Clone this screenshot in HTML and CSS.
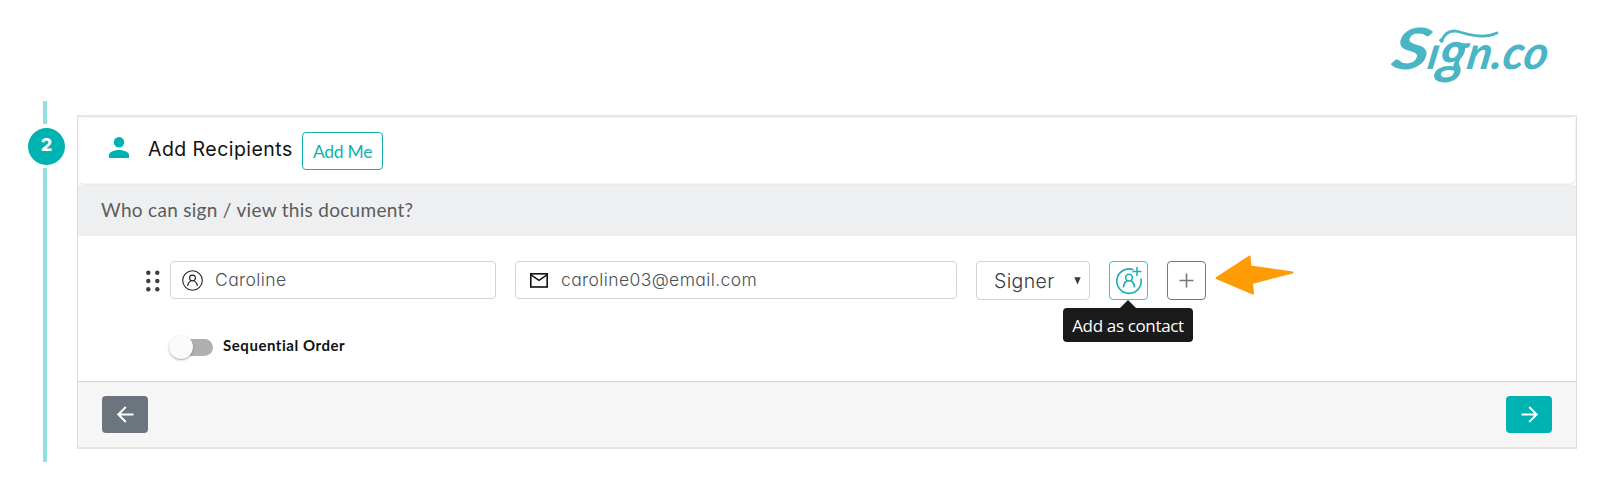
FILE: index.html
```html
<!DOCTYPE html>
<html lang="en">
<head>
<meta charset="utf-8">
<title>Add Recipients</title>
<link rel="stylesheet" href="styles.css">
</head>
<body>
<header class="top">
  <svg class="logo" width="180" height="80" viewBox="1375 15 180 80" role="img" aria-label="Sign.co">
    <g class="logo-text">
      <text transform="translate(1390 69) skewX(-10)" font-size="57" textLength="37" lengthAdjust="spacingAndGlyphs">S</text>
      <text transform="translate(1426 69) skewX(-10)" font-size="46" textLength="64" lengthAdjust="spacingAndGlyphs">ı<tspan font-size="58" dy="3">g</tspan><tspan dy="-3">n</tspan></text>
      <text transform="translate(1490 69) skewX(-10)" font-size="47" textLength="56" lengthAdjust="spacingAndGlyphs">.co</text>
    </g>
    <path d="M1441.500 40.500C1445 33 1450 29.500 1458 31.500C1474 36.500 1486 38 1497 33" fill="none" stroke="#4ab5c4" stroke-width="2.800" stroke-linecap="round"/>
    <circle cx="1441.500" cy="40.500" r="2.200" fill="#4ab5c4"/>
  </svg>
</header>
<main class="step">
  <aside class="rail">
    <span class="line line-top"></span>
    <span class="badge">2</span>
    <span class="line line-rest"></span>
  </aside>
  <section class="card">
    <div class="card-head">
      <svg class="person" width="20" height="21" viewBox="0 0 20 21"><circle cx="10" cy="5.200" r="5.200"/><path d="M0 21v-3c0-3.300 6-5 10-5s10 1.700 10 5v3z"/></svg>
      <h1 class="title"><span>Add Recipients</span></h1>
      <button class="add-me"><span>Add Me</span></button>
    </div>
    <div class="question"><span>Who can sign / view this document?</span></div>
    <div class="card-body">
      <div class="row">
        <svg class="grip" width="14" height="22" viewBox="0 0 14 22"><circle cx="2.300" cy="2.800" r="2.200"/><circle cx="11.300" cy="2.800" r="2.200"/><circle cx="2.300" cy="11" r="2.200"/><circle cx="11.300" cy="11" r="2.200"/><circle cx="2.300" cy="19.300" r="2.200"/><circle cx="11.300" cy="19.300" r="2.200"/></svg>
        <div class="field name">
          <svg width="21" height="21" viewBox="0 0 21 21" fill="none" stroke="#222" stroke-width="1.100"><circle cx="10.500" cy="10.500" r="9.800"/><circle cx="10.500" cy="8" r="2.900"/><path d="M5.500 15.800C6 12.500 7.800 11.500 9 10.600M15.500 15.800C15 12.500 13.200 11.500 12 10.600"/></svg>
          <span class="value">Caroline</span>
        </div>
        <div class="field email">
          <svg width="18" height="15" viewBox="0 0 18 15" fill="none" stroke="#111" stroke-width="1.600"><rect x=".8" y=".8" width="16.400" height="13.200"/><path d="M1 1.800L9 7.300L17 1.800" stroke-width="1.400"/></svg>
          <span class="value">caroline03@email.com</span>
        </div>
        <div class="select"><span class="value">Signer</span><svg width="7" height="8" viewBox="0 0 7 8"><path d="M.3 .3h6.400L3.500 7.500z" fill="#343a40"/></svg></div>
        <div class="contact">
          <button class="square teal" aria-label="Add as contact">
            <svg width="28" height="28" viewBox="0 0 28 28" fill="none" stroke="#15b0b2" stroke-width="1.600"><path d="M18.500 2.800A12.200 12.200 0 1 0 25.900 11.500"/><path d="M22 0v9M17.500 4.500h9" stroke-width="1.500"/><circle cx="14" cy="10.600" r="3.400"/><path d="M8.500 20.500C8.500 16 10.500 14.700 12.300 13.500M19.500 20.500C19.500 16 17.500 14.700 15.700 13.500"/></svg>
          </button>
          <div class="tooltip"><span>Add as contact</span></div>
        </div>
        <button class="square grey" aria-label="Add"><svg width="15" height="15" viewBox="0 0 15 15"><path d="M7.500 .5v14M.5 7.500h14" stroke="#777" stroke-width="1.600"/></svg></button>
        <svg class="pointer" width="79" height="41" viewBox="0 0 79 41"><path d="M1.500 23L34.500 1.500L35.500 11.500L77.500 17.500L37 28L38 38.500Z" fill="#ff9b05" stroke="#ff9b05" stroke-width="2" stroke-linejoin="round"/></svg>
      </div>
      <div class="order">
        <span class="toggle"><span class="knob"></span></span>
        <span class="order-label">Sequential Order</span>
      </div>
    </div>
    <footer class="card-foot">
      <button class="nav back" aria-label="Back"><svg width="17" height="17" viewBox="0 0 17 17"><path d="M16.500 8.500H1.500M8.800 1L1.300 8.500L8.800 16"/></svg></button>
      <button class="nav next" aria-label="Next"><svg width="17" height="17" viewBox="0 0 17 17"><path d="M.5 8.500h15M8.200 1l7.500 7.500L8.200 16"/></svg></button>
    </footer>
  </section>
</main>
</body>
</html>
```
FILE: styles.css
```css
* { box-sizing: border-box; }
body { margin: 0; height: 482px; overflow: hidden; background: #fff; font-family: Inter, "Liberation Sans", sans-serif; font-feature-settings: "cv11"; }
button { margin: 0; padding: 0; display: flex; align-items: center; justify-content: center; font-family: inherit; font-feature-settings: inherit; background: #fff; }
span { white-space: nowrap; }
svg { display: block; flex: none; overflow: visible; }
.top { height: 101px; padding: 15px 45px 0 0; display: flex; justify-content: flex-end; }
.logo-text { fill: #4ab5c4; font-family: Lato, sans-serif; font-weight: 700; font-style: italic; }
.step { display: flex; }
.rail { width: 77px; padding-left: 28px; display: flex; flex-direction: column; }
.line { width: 4px; margin-left: 15px; background: #92e0df; }
.line-top { height: 23px; }
.badge { width: 37px; height: 37px; margin: 4px 0 3px; border-radius: 50%; background: #00b3b3; color: #fff; font-size: 18px; font-weight: 800; line-height: 33px; text-align: center; }
.line-rest { height: 294px; }
.card { width: 1500px; height: 334px; margin-top: 14px; border: 1px solid #dedfe1; border-top: 2px solid #e7e7e8; border-bottom: 2px solid #e5e5e6; }
.card-head { height: 68px; display: flex; padding: 15px 0 0 31px; border-bottom: 1px solid #e9eaeb; border-radius: 6px; box-shadow: inset 0 0 0 1px #f4f4f5; }
.person { margin: 5px 19px 0 0; fill: #00b3b3; }
.title { margin: 3px 0 0; width: 154px; font-size: 19.500px; font-weight: 400; line-height: 28px; color: #111; letter-spacing: .45px; }
.add-me { width: 81px; height: 38px; border: 1px solid #13adad; border-radius: 4px; color: #0fb2b2; font-family: Lato, sans-serif; font-size: 17.500px; font-weight: 400; letter-spacing: -.3px; }
.question { height: 51px; padding: 12px 0 0 23px; background: #eeeff1; color: #5c5c5c; font-family: Lato, sans-serif; font-size: 19px; line-height: 26px; letter-spacing: .3px; }
.card-body { height: 145px; padding: 25px 0 0 67px; }
.row { display: flex; height: 39px; }
.grip { margin: 9px 11px 0 1px; fill: #3b3e42; }
.field { height: 38px; border: 1px solid #ced4da; border-radius: 4px; display: flex; align-items: center; color: #495057; font-size: 17.500px; font-weight: 300; line-height: 24px; letter-spacing: .4px; }
.field .value { padding-bottom: 1px; }
.name { width: 326px; padding-left: 11px; gap: 12px; margin: 0 19px 0 -1px; }
.email { width: 442px; padding-left: 14px; gap: 13px; margin-right: 19px; }
.select { width: 114px; height: 39px; padding: 0 8px 0 17px; border: 1px solid #ced4da; border-radius: 4px; display: flex; align-items: center; justify-content: space-between; color: #343a40; font-size: 19.500px; font-weight: 300; letter-spacing: .35px; margin-right: 19px; }
.contact { position: relative; margin-right: 19px; }
.square { width: 39px; height: 39px; border-radius: 4px; }
.teal { border: 1px solid #48bfc0; }
.grey { border: 1px solid #777; margin-right: 9px; }
.pointer { margin-top: -6px; }
.tooltip { position: absolute; top: 47px; left: -46px; width: 130px; height: 34px; border-radius: 4px; background: #1a1a1a; color: #fff; font-family: "Open Sans", sans-serif; font-size: 17px; letter-spacing: -.35px; line-height: 35px; text-align: center; }
.tooltip::before { content: ""; position: absolute; left: 57px; top: -8px; border: 8px solid transparent; border-top: 0; border-bottom-color: #1a1a1a; }
.order { display: flex; align-items: center; margin-top: 34px; padding-left: 24px; height: 26px; }
.toggle { width: 44px; height: 17px; border-radius: 9px; background: linear-gradient(90deg, transparent 10px, #b0b0b0 10px); display: flex; align-items: center; margin-right: 10px; }
.knob { width: 24px; height: 24px; border-radius: 50%; background: #fafafa; box-shadow: 0 1px 2px rgba(0,0,0,.35); }
.order-label { font-family: Lato, sans-serif; font-size: 15px; font-weight: 700; color: #111; line-height: 20px; padding-bottom: 4px; letter-spacing: .55px; }
.card-foot { height: 66px; border-top: 1px solid #d2d3d5; background: #f6f6f6; display: flex; justify-content: space-between; padding: 14px 24px 0 24px; }
.nav { width: 46px; height: 37px; border-radius: 4px; border: 0; }
.nav path { fill: none; stroke: #fff; stroke-width: 2; }
.back { background: #6c757d; }
.next { background: #00b3b3; }
```
